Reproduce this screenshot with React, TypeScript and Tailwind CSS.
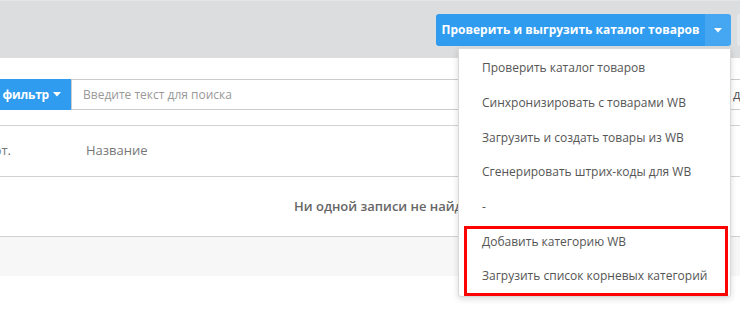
import React from "react";

const menuItems = [
  "Проверить каталог товаров",
  "Синхронизировать с товарами WB",
  "Загрузить и создать товары из WB",
  "Сгенерировать штрих-коды для WB",
  "-",
  "Добавить категорию WB",
  "Загрузить список корневых категорий",
];

const Caret = () => (
  <svg width="8" height="5" viewBox="0 0 8 5" className="shrink-0">
    <path d="M0 0 L8 0 L4 4.5 Z" fill="#ffffff" />
  </svg>
);

const App = () => {
  return (
    <div
      className="relative w-[740px] h-[315px] overflow-hidden bg-white text-[13px]"
      style={{ fontFamily: '"Open Sans", "Noto Sans", sans-serif' }}
    >
      {/* top bar */}
      <div className="h-[58px] bg-[#dcdddf] border-t border-[#e4e5e6] flex items-start pt-[13px] pl-[436px] gap-[6px]">
        <div className="flex shrink-0 h-[32px]">
          <button className="w-[269px] h-full bg-[#2f9cef] rounded-l-[3px] text-white font-bold text-[12px] flex items-center justify-center whitespace-nowrap">
            Проверить и выгрузить каталог товаров
          </button>
          <button className="w-[26px] h-full bg-[#45a7f2] rounded-r-[3px] flex items-center justify-center">
            <Caret />
          </button>
        </div>
        <div className="w-[30px] h-[32px] shrink-0 bg-[#e6e7e9] rounded-[3px]"></div>
      </div>

      {/* search row */}
      <div className="flex mt-[21px] h-[31px]">
        <div className="w-[71px] shrink-0 bg-[#2f9cef] overflow-hidden flex items-center justify-end pr-[10px] gap-[4px]">
          <span className="text-white font-bold text-[12px] tracking-[-0.2px] whitespace-nowrap shrink-0">Добавить фильтр</span>
          <Caret />
        </div>
        <div className="w-[660px] shrink-0 border border-[#cccccc] flex items-center pl-[11px] text-[#999999] text-[12px]">
          Введите текст для поиска
        </div>
        <div className="shrink-0 border-y border-[#cccccc] flex items-center pl-[2px] text-[#555555] whitespace-nowrap">
          де
        </div>
      </div>

      {/* table */}
      <div className="mt-[15px] border-t border-[#d2d2d2]">
        <div className="h-[51px] flex items-center border-b border-[#d2d2d2] text-[#777777]">
          <div className="w-[86px] shrink-0">
            <div className="w-[11px] overflow-hidden flex justify-end">
              <span className="whitespace-nowrap shrink-0">Арт.</span>
            </div>
          </div>
          <span>Название</span>
        </div>
        <div className="h-[60px] flex items-center pl-[294px] border-b border-[#d2d2d2] text-[#666666] font-semibold whitespace-nowrap">
          Ни одной записи не найдено
        </div>
        <div className="h-[39px] bg-[#f7f7f7]"></div>
      </div>

      {/* dropdown menu */}
      <div className="absolute left-[458px] top-[48px] w-[273px] h-[249px] bg-white border border-[#d9d9d9] rounded-b-[3px] shadow-[0_2px_6px_rgba(0,0,0,0.15)] py-[2px] text-[12px]">
        {menuItems.map((item) => (
          <div key={item} className="h-[34.7px] flex items-center pl-[23px] text-[#555555] whitespace-nowrap">
            {item}
          </div>
        ))}
        <div className="absolute left-[5px] top-[177px] w-[264px] h-[70px] border-[3px] border-[#ff0000]"></div>
      </div>
    </div>
  );
};

export default App;
